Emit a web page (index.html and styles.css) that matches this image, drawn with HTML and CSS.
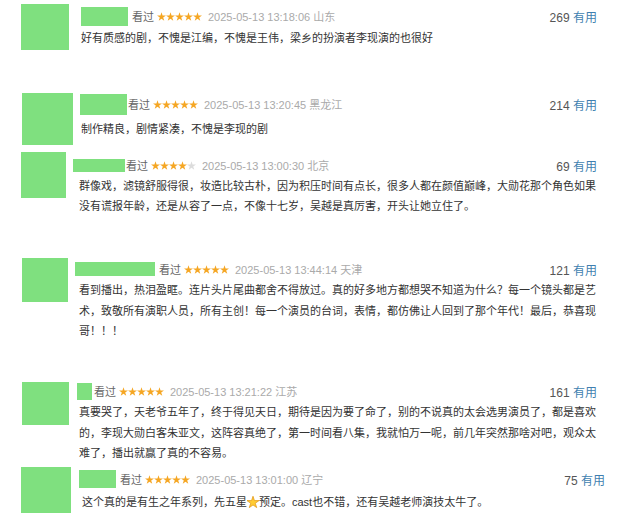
FILE: index.html
```html
<!DOCTYPE html>
<html lang="zh">
<head>
<meta charset="utf-8">
<link rel="stylesheet" href="styles.css">
</head>
<body>
<svg class="defs" width="0" height="0" aria-hidden="true">
  <defs>
    <symbol id="st" viewBox="0 0 9 9">
      <polygon points="4.5,0.2 5.56,3.45 8.97,3.45 6.21,5.45 7.26,8.7 4.5,6.7 1.74,8.7 2.79,5.45 0.03,3.45 3.44,3.45"/>
    </symbol>
  </defs>
</svg>

<div class="item c1">
  <div class="avatar"></div>
  <div class="body">
    <div class="meta">
      <span class="name"></span><span class="seen">看过</span>
      <svg class="stars" width="45" height="9" viewBox="0 0 45 9"><use href="#st" x="0" width="9" height="9"/><use href="#st" x="9" width="9" height="9"/><use href="#st" x="18" width="9" height="9"/><use href="#st" x="27" width="9" height="9"/><use href="#st" x="36" width="9" height="9"/></svg>
      <span class="time">2025-05-13 13:18:06 山东</span>
      <span class="votes"><span class="num">269</span> <span class="useful">有用</span></span>
    </div>
    <p class="text">好有质感的剧，不愧是江编，不愧是王伟，梁乡的扮演者李现演的也很好</p>
  </div>
</div>

<div class="item c2">
  <div class="avatar"></div>
  <div class="body">
    <div class="meta">
      <span class="name"></span><span class="seen">看过</span>
      <svg class="stars" width="45" height="9" viewBox="0 0 45 9"><use href="#st" x="0" width="9" height="9"/><use href="#st" x="9" width="9" height="9"/><use href="#st" x="18" width="9" height="9"/><use href="#st" x="27" width="9" height="9"/><use href="#st" x="36" width="9" height="9"/></svg>
      <span class="time">2025-05-13 13:20:45 黑龙江</span>
      <span class="votes"><span class="num">214</span> <span class="useful">有用</span></span>
    </div>
    <p class="text">制作精良，剧情紧凑，不愧是李现的剧</p>
  </div>
</div>

<div class="item c3">
  <div class="avatar"></div>
  <div class="body">
    <div class="meta">
      <span class="name"></span><span class="seen">看过</span>
      <svg class="stars" width="45" height="9" viewBox="0 0 45 9"><use href="#st" x="0" width="9" height="9"/><use href="#st" x="9" width="9" height="9"/><use href="#st" x="18" width="9" height="9"/><use href="#st" x="27" width="9" height="9"/><use class="off" href="#st" x="36" width="9" height="9"/></svg>
      <span class="time">2025-05-13 13:00:30 北京</span>
      <span class="votes"><span class="num">69</span> <span class="useful">有用</span></span>
    </div>
    <p class="text">群像戏，滤镜舒服得很，妆造比较古朴，因为积压时间有点长，很多人都在颜值巅峰，大勋花那个角色如果没有谎报年龄，还是从容了一点，不像十七岁，吴越是真厉害，开头让她立住了。</p>
  </div>
</div>

<div class="item c4">
  <div class="avatar"></div>
  <div class="body">
    <div class="meta">
      <span class="name"></span><span class="seen">看过</span>
      <svg class="stars" width="45" height="9" viewBox="0 0 45 9"><use href="#st" x="0" width="9" height="9"/><use href="#st" x="9" width="9" height="9"/><use href="#st" x="18" width="9" height="9"/><use href="#st" x="27" width="9" height="9"/><use href="#st" x="36" width="9" height="9"/></svg>
      <span class="time">2025-05-13 13:44:14 天津</span>
      <span class="votes"><span class="num">121</span> <span class="useful">有用</span></span>
    </div>
    <p class="text">看到播出，热泪盈眶。连片头片尾曲都舍不得放过。真的好多地方都想哭不知道为什么？每一个镜头都是艺术，致敬所有演职人员，所有主创！每一个演员的台词，表情，都仿佛让人回到了那个年代！最后，恭喜现哥！！！</p>
  </div>
</div>

<div class="item c5">
  <div class="avatar"></div>
  <div class="body">
    <div class="meta">
      <span class="name"></span><span class="seen">看过</span>
      <svg class="stars" width="45" height="9" viewBox="0 0 45 9"><use href="#st" x="0" width="9" height="9"/><use href="#st" x="9" width="9" height="9"/><use href="#st" x="18" width="9" height="9"/><use href="#st" x="27" width="9" height="9"/><use href="#st" x="36" width="9" height="9"/></svg>
      <span class="time">2025-05-13 13:21:22 江苏</span>
      <span class="votes"><span class="num">161</span> <span class="useful">有用</span></span>
    </div>
    <p class="text">真要哭了，天老爷五年了，终于得见天日，期待是因为要了命了，别的不说真的太会选男演员了，都是喜欢的，李现大勋白客朱亚文，这阵容真绝了，第一时间看八集，我就怕万一呢，前几年突然那啥对吧，观众太难了，播出就赢了真的不容易。</p>
  </div>
</div>

<div class="item c6">
  <div class="avatar"></div>
  <div class="body">
    <div class="meta">
      <span class="name"></span><span class="seen">看过</span>
      <svg class="stars" width="45" height="9" viewBox="0 0 45 9"><use href="#st" x="0" width="9" height="9"/><use href="#st" x="9" width="9" height="9"/><use href="#st" x="18" width="9" height="9"/><use href="#st" x="27" width="9" height="9"/><use href="#st" x="36" width="9" height="9"/></svg>
      <span class="time">2025-05-13 13:01:00 辽宁</span>
      <span class="votes"><span class="num">75</span> <span class="useful">有用</span></span>
    </div>
    <p class="text">这个真的是有生之年系列，先五星<svg class="emoji" width="12" height="12" viewBox="0 0 9 9" role="img" aria-label="⭐"><use href="#st" width="9" height="9"/></svg>预定。cast也不错，还有吴越老师演技太牛了。</p>
  </div>
</div>
</body>
</html>
```

FILE: styles.css
```css
html, body {
  margin: 0;
  padding: 0;
  background: #fff;
}

body {
  width: 640px;
  height: 520px;
  overflow: hidden;
  font-family: "Liberation Sans", Arial, "Noto Sans CJK SC", sans-serif;
  font-size: 11px;
  color: #333;
}

.defs {
  position: absolute;
  width: 0;
  height: 0;
}

.item {
  display: flex;
  align-items: flex-start;
  height: var(--h);
}

.avatar {
  flex: none;
  margin-left: var(--ax);
  margin-top: var(--ay);
  width: var(--aw);
  height: var(--ah);
  background: #7fe07f;
}

.body {
  flex: none;
  margin-left: var(--bx);
  margin-top: var(--by);
  width: var(--bw);
}

.meta {
  display: flex;
  align-items: center;
  height: 20px;
  white-space: nowrap;
}

.name {
  flex: none;
  width: var(--nw);
  height: var(--nh);
  margin-right: var(--ng);
  background: #7fe07f;
}

.seen {
  color: #666;
  margin-right: 3px;
}

.stars {
  display: block;
  flex: none;
  margin-right: 6px;
  fill: #f5a623;
}

.stars .off {
  fill: #dcdcdc;
}

.time {
  color: #aaa;
}

.votes {
  margin-left: auto;
  font-size: 12px;
  color: #555;
}

.useful {
  color: #3f7fb0;
}

.text {
  margin: var(--td) 0 0 var(--tx);
  line-height: var(--lh);
  color: #333;
}

.emoji {
  display: inline-block;
  vertical-align: -2px;
  fill: #ffcc33;
  stroke: #e39a1a;
  stroke-width: 0.6;
  stroke-linejoin: round;
}

.c1 { --h: 80px;  --ax: 21px; --ay: 4px;  --aw: 48px; --ah: 46px; --bx: 12px; --by: 6px;  --bw: 516px; --nw: 47px; --nh: 19px; --ng: 4px; --tx: 0px; --td: 2px; --lh: 20px; }
.c2 { --h: 65px;  --ax: 22px; --ay: 13px; --aw: 51px; --ah: 52px; --bx: 7px;  --by: 14px; --bw: 517px; --nw: 47px; --nh: 21px; --ng: 1px; --tx: 1px; --td: 5px; --lh: 20px; }
.c3 { --h: 105px; --ax: 21px; --ay: 7px;  --aw: 45px; --ah: 46px; --bx: 7px;  --by: 10px; --bw: 524px; --nw: 52px; --nh: 13px; --ng: 1px; --tx: 6px; --td: 2px; --lh: 19.5px; }
.c4 { --h: 120px; --ax: 22px; --ay: 8px;  --aw: 46px; --ah: 44px; --bx: 7px;  --by: 9px;  --bw: 522px; --nw: 80px; --nh: 14px; --ng: 4px; --tx: 4px; --td: 1px; --lh: 20.5px; }
.c5 { --h: 85px;  --ax: 22px; --ay: 12px; --aw: 47px; --ah: 43px; --bx: 8px;  --by: 11px; --bw: 520px; --nw: 15px; --nh: 17px; --ng: 2px; --tx: 2px; --td: 1px; --lh: 20.5px; }
.c6 { --h: 65px;  --ax: 21px; --ay: 12px; --aw: 50px; --ah: 46px; --bx: 8px;  --by: 14px; --bw: 526px; --nw: 37px; --nh: 18px; --ng: 4px; --tx: 3px; --td: 3px; --lh: 20px; }
```
